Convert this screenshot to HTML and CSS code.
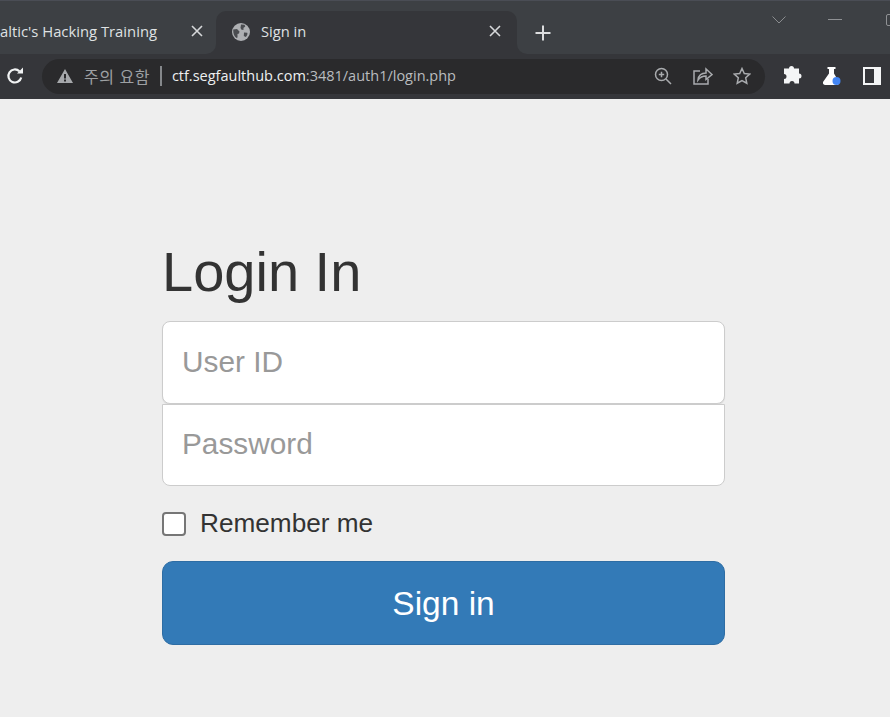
FILE: index.html
```html
<!DOCTYPE html>
<html lang="ko">
<head>
<meta charset="utf-8">
<title>Sign in</title>
<link rel="stylesheet" href="styles.css">
</head>
<body>
<header class="chrome">
  <div class="strip">
    <div class="tab tab-idle">
      <span class="tab-title">altic's Hacking Training</span>
      <svg class="tab-close" viewBox="0 0 12 12"><path d="M1 1l10 10M11 1L1 11"/></svg>
    </div>
    <div class="tab-slot">
      <div class="tab tab-active">
        <svg class="globe" viewBox="0 0 18 18"><circle cx="9" cy="9" r="9" fill="#aeb0b3"/><path fill="#4a4c50" d="M1.200 6.500L5 6l2.500 2.500-.5 2-1.500.5v3.500l-1 .5C2.500 13.500 1 11 1.200 6.500zM9 1.500l3.500.3.800 1.700-2 1.500.500 1.500-2 .5L8.500 5zM12 9.500l3.300.2c.5 1.500-.3 3-1.500 4.300l-2-1z"/></svg>
        <span class="tab-title active-title">Sign in</span>
        <svg class="tab-close" viewBox="0 0 12 12"><path d="M1 1l10 10M11 1L1 11"/></svg>
      </div>
    </div>
    <div class="strip-rest">
      <svg class="new-tab" viewBox="0 0 16 16"><path d="M8 .5v15M.5 8h15"/></svg>
      <svg class="caret" viewBox="0 0 14 8"><path d="M.5 .5L7 7l6.500-6.500"/></svg>
      <span class="minimize"></span>
      <span class="maximize"></span>
    </div>
  </div>
  <div class="toolbar">
    <svg class="reload" viewBox="0 0 18 18"><path class="reload-arc" d="M15.200 10.500A6.500 6.500 0 1 1 13.400 4.300"/><path class="reload-head" d="M11 6.500h6V.5z"/></svg>
    <div class="omnibox">
      <svg class="warn" viewBox="0 0 16 14"><path fill-rule="evenodd" d="M8 0l8 14H0zM7 5v4.500h2V5zm0 5.500v2h2v-2z"/></svg>
      <span class="warn-text">주의 요함</span>
      <span class="divider"></span>
      <span class="url"><span class="url-host">ctf.segfaulthub.com</span>:3481/auth1/login.php</span>
      <svg class="omni-icon zoom-icon" viewBox="0 0 18 18"><circle cx="7.500" cy="7.500" r="6"/><path d="M12 12l5 5M7.500 4.800v5.400M4.800 7.500h5.400"/></svg>
      <svg class="omni-icon share-icon" viewBox="0 0 20 18"><path d="M7 4H1v13h14v-5"/><path d="M5 13c.5-4.500 3.500-7 8-7V2l6 5.500-6 5V9c-3.500 0-6 1.200-8 4z"/></svg>
      <svg class="omni-icon star-icon" viewBox="0 0 18 18"><path d="M9 1.500l2.300 5 5.400.6-4 3.700 1.100 5.400L9 13.500l-4.800 2.700 1.100-5.400-4-3.700 5.400-.6z"/></svg>
    </div>
    <svg class="puzzle" viewBox="0 0 20 20"><path d="M7 3a2.500 2.500 0 0 1 5 0h5v5a2.500 2.500 0 0 1 0 5v5h-4.500a2.500 2.500 0 0 0-5 0H2v-4.500a2.500 2.500 0 0 0 0-5V3z" transform="translate(0 -.5)"/></svg>
    <svg class="flask" viewBox="0 0 18 18"><path fill="#fff" d="M4.500 0h8v2H11v4.500L16 15c.5 1.500-.5 3-2 3H2c-1.500 0-2.500-1.500-2-3l6-8.500V2H4.500z"/><circle cx="13.500" cy="14" r="4" fill="#4285f4"/></svg>
    <svg class="panel" viewBox="0 0 18 18"><path fill-rule="evenodd" d="M0 0h18v18H0zM2 2v14h9V2z"/></svg>
  </div>
</header>
<main class="page">
  <form class="signin">
    <h1 class="heading">Login In</h1>
    <input class="field field-first" type="text" placeholder="User ID">
    <input class="field field-last" type="password" placeholder="Password">
    <label class="remember"><input class="check" type="checkbox"><span class="remember-text">Remember me</span></label>
    <button class="submit" type="button">Sign in</button>
  </form>
</main>
</body>
</html>
```
FILE: styles.css
```css
* { box-sizing: border-box; }
html, body { margin: 0; height: 100%; }
body {
  display: flex;
  flex-direction: column;
  overflow: hidden;
  background: #eee;
  font-family: "Liberation Sans", Arial, sans-serif;
  color: #333;
}
.chrome { height: 99px; flex: none; background: #35363a; }
.strip {
  display: flex;
  height: 54px;
  background: #35363a;
}
.tab { display: flex; align-items: center; }
.tab-idle {
  flex: none;
  width: 216px;
  justify-content: flex-end;
  padding: 7px 13px 0 0;
  background: #3d4044;
  border-bottom-right-radius: 10px;
  border-top: 1px solid #4a4d55;
  overflow: hidden;
}
.tab-idle .tab-title { flex: none; margin-right: 34px; font-size: 14.800px; white-space: nowrap; }
.tab-title {
  font: 14.700px/20px "Open Sans", "Noto Sans", sans-serif;
  color: #dfe1e3;
}
.tab-close { width: 12px; height: 12px; fill: none; stroke: #d6d8da; stroke-width: 1.600; flex: none; }
.tab-slot {
  flex: none;
  width: 301px;
  padding-top: 10px;
  background: #3d4044;
  border-top: 1px solid #4a4d55;
}
.tab-active {
  height: 43px;
  padding: 0 16px 3px;
  background: #35363a;
  border-radius: 10px 10px 0 0;
}
.globe { width: 18px; height: 18px; flex: none; margin: 2px 11px 0 0; }
.active-title { flex: 1; }
.strip-rest {
  flex: 1;
  display: flex;
  align-items: flex-start;
  background: #3d4044;
  border-bottom-left-radius: 10px;
  border-top: 1px solid #4a4d55;
}
.new-tab { width: 16px; height: 16px; margin: 24px 0 0 18px; fill: none; stroke: #dcdddf; stroke-width: 2; flex: none; }
.caret { width: 14px; height: 8px; margin: 15px 0 0 221px; fill: none; stroke: #8a8c8f; stroke-width: 1; flex: none; }
.minimize { width: 14px; height: 1px; margin: 18px 0 0 42px; background: #8f9194; flex: none; }
.maximize { width: 12px; height: 12px; margin: 13px 0 0 44px; border: 1px solid #8f9194; border-radius: 2px; flex: none; }
.toolbar { display: flex; align-items: center; height: 45px; padding: 0 0 1px 0; }
.reload { width: 18px; height: 18px; flex: none; margin: 0 0 0 6px; }
.reload-arc { fill: none; stroke: #f1f3f4; stroke-width: 2.200; }
.reload-head { fill: #f1f3f4; }
.omnibox {
  display: flex;
  align-items: center;
  width: 723px;
  height: 35px;
  margin-left: 18px;
  padding-left: 15px;
  background: #2a2a2c;
  border-radius: 18px;
  flex: none;
}
.warn { width: 16px; height: 14px; fill: #a6a8ab; flex: none; }
.warn-text {
  margin-left: 11px;
  font: 16px/20px "Noto Sans CJK KR", sans-serif;
  letter-spacing: .5px;
  color: #9da0a3;
  white-space: nowrap;
}
.divider { width: 2px; height: 20px; margin-left: 10px; background: #85888b; flex: none; }
.url {
  margin-left: 10px;
  flex: 1;
  font: 14.500px/20px "Open Sans", "Noto Sans", sans-serif;
  color: #b9bcbf;
  white-space: nowrap;
}
.url-host { color: #eef0f1; }
.omni-icon { height: 18px; flex: none; fill: none; stroke: #a9abae; stroke-width: 1.500; }
.zoom-icon { width: 18px; margin-right: 21px; }
.share-icon { width: 20px; margin-right: 20px; }
.star-icon { width: 18px; margin-right: 14px; }
.puzzle { width: 20px; height: 20px; margin-left: 17px; fill: #f4f5f6; flex: none; }
.flask { width: 18px; height: 18px; margin-left: 21px; flex: none; }
.panel { width: 18px; height: 18px; margin-left: 22px; fill: #f4f5f6; flex: none; }
.page { flex: 1; padding: 141px 165px 0 162px; }
.signin { display: flex; flex-direction: column; }
.heading {
  margin: 0 0 17px;
  font-size: 56px;
  line-height: 64px;
  font-weight: 400;
  color: #333;
}
.field {
  display: block;
  width: 100%;
  padding: 0 19px;
  border: 1px solid #ccc;
  background: #fff;
  font: 29.800px "Liberation Sans", Arial, sans-serif;
  color: #555;
  outline: none;
}
.field::placeholder { color: #999; opacity: 1; }
.field-first { height: 83px; padding-bottom: 2px; border-radius: 8px; box-shadow: 0 1px 1px rgba(0,0,0,.08); }
.field-last { height: 82px; padding-bottom: 3px; border-radius: 0 0 8px 8px; }
.remember {
  display: flex;
  align-items: center;
  margin: 20px 0 19px;
  font-size: 26.200px;
  line-height: 36px;
  color: #333;
}
.remember-text { line-height: 34px; padding-bottom: 2px; }
.check {
  appearance: none;
  width: 24px;
  height: 24px;
  margin: 0 14px 0 0;
  border: 2px solid #767676;
  border-radius: 4px;
  background: #fff;
  flex: none;
}
.submit {
  height: 84px;
  border: 1px solid #2e6da4;
  border-radius: 11px;
  background: #337ab7;
  color: #fff;
  font: 33.500px "Liberation Sans", Arial, sans-serif;
  padding: 2px 0 0;
}
```
